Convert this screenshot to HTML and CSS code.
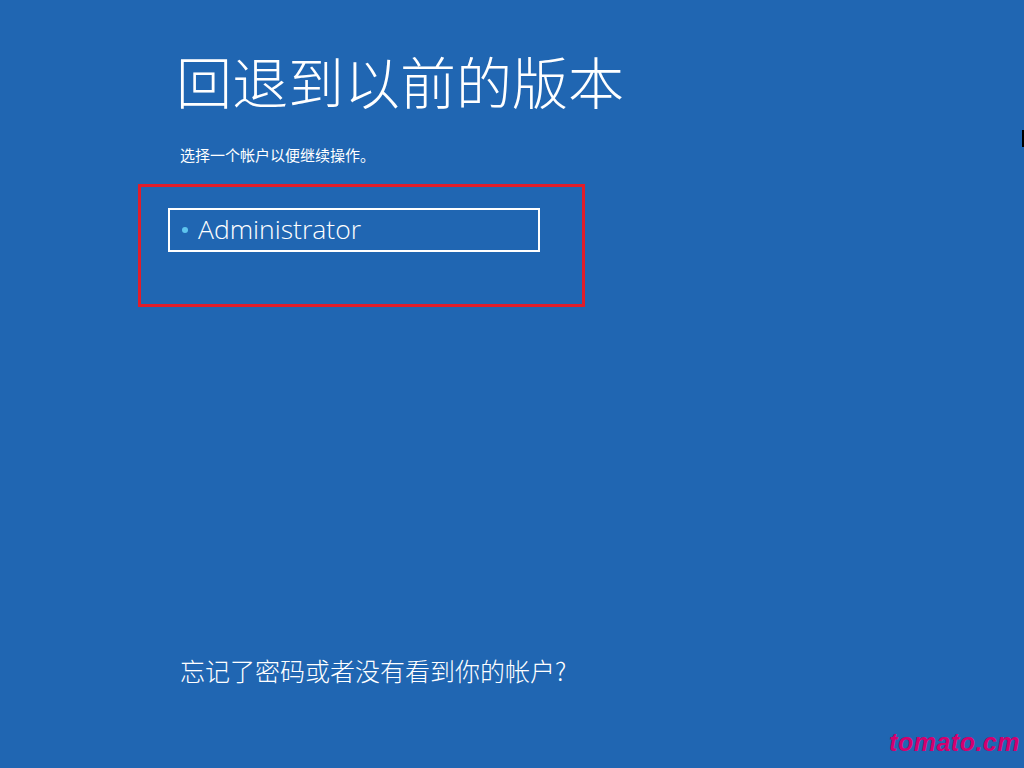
FILE: index.html
```html
<!DOCTYPE html>
<html lang="zh-CN">
<head>
  <meta charset="UTF-8">
  <title>回退到以前的版本</title>
  <link rel="stylesheet" href="styles.css">
</head>
<body>
  <div class="screen">
    <div class="content">
      <h1 class="title">回退到以前的版本</h1>
      <p class="subtitle">选择一个帐户以便继续操作。</p>

      <!-- account picker, highlighted -->
      <div class="highlight">
        <div class="account">
          <span class="dot"></span>
          <span class="account-name">Administrator</span>
        </div>
      </div>
    </div>

    <p class="forgot">忘记了密码或者没有看到你的帐户?</p>

    <span class="edge-mark"></span>
    <span class="watermark">tomato.cm</span>
  </div>
</body>
</html>
```

FILE: styles.css
```css
html, body {
  margin: 0;
  padding: 0;
}
body {
  background-color: #2066b2;
  color: #fff;
  font-family: "Noto Sans CJK SC", "Noto Sans", sans-serif;
}
.screen {
  position: relative;
  width: 1024px;
  height: 768px;
  overflow: hidden;
  display: flex;
  flex-direction: column;
}
.content {
  flex: 1;
  padding-left: 138px;
}
.title {
  margin: 40px 0 0 38px;
  font-size: 56px;
  font-weight: 300;
  line-height: 80px;
  letter-spacing: 0;
}
.subtitle {
  margin: 25px 0 0 42px;
  font-size: 15px;
  line-height: 20px;
}
.highlight {
  margin-top: 19px;
  width: 447px;
  height: 123px;
  border: 3px solid #e11d2a;
  box-sizing: border-box;
  padding: 21px 0 0 27px;
}
.account {
  width: 372px;
  height: 44px;
  box-sizing: border-box;
  border: 2px solid #fff;
  display: flex;
  align-items: center;
  padding-left: 12px;
}
.dot {
  width: 6px;
  height: 6px;
  border-radius: 50%;
  background-color: #5ec4ee;
  margin-right: 10px;
}
.account-name {
  font-family: "Open Sans", "Noto Sans", sans-serif;
  font-weight: 300;
  font-size: 26.5px;
  line-height: 40px;
  margin-top: -2px;
}
.forgot {
  margin: 0 0 80px 180px;
  font-size: 25px;
  font-weight: 300;
  line-height: 36px;
}
.edge-mark {
  position: absolute;
  right: 0;
  top: 130px;
  width: 2px;
  height: 17px;
  background-color: #000;
}
.watermark {
  position: absolute;
  right: 4px;
  bottom: 11px;
  color: #d3006e;
  font-family: "Liberation Sans", Arial, sans-serif;
  font-style: italic;
  font-weight: bold;
  font-size: 25px;
  letter-spacing: 0.5px;
}
```
